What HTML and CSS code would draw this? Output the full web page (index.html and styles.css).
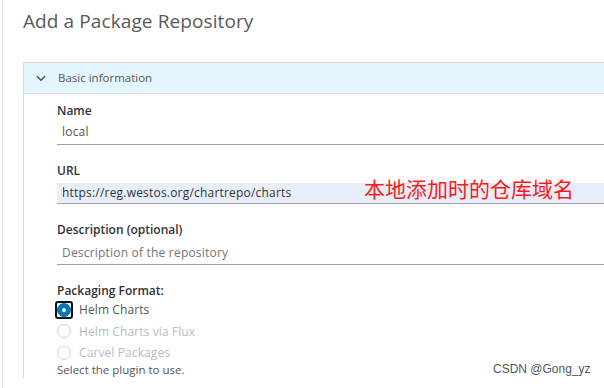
FILE: index.html
```html
<!DOCTYPE html>
<html>
<head>
<meta charset="utf-8">
<link rel="stylesheet" href="styles.css">
</head>
<body>
<div class="app">
  <div class="rail"></div>
  <div class="main">
    <h1 class="title">Add a Package Repository</h1>
    <section class="panel">
      <div class="panel-head">
        <svg class="chev" width="10" height="7" viewBox="0 0 10 7"><path d="M1 1.2 L5 5.2 L9 1.2" fill="none" stroke="#4a4a4a" stroke-width="1.5"/></svg>
        <span>Basic information</span>
      </div>
      <div class="panel-body">
        <div class="field">
          <label class="label">Name</label>
          <div class="input">local</div>
        </div>
        <div class="field">
          <label class="label">URL</label>
          <div class="input input-filled">https://reg.westos.org/chartrepo/charts</div>
        </div>
        <div class="field">
          <label class="label">Description (optional)</label>
          <div class="input input-desc placeholder">Description of the repository</div>
        </div>
        <div class="field radios">
          <label class="label">Packaging Format:</label>
          <div class="radio checked"><span class="ring"><span class="dot"></span></span><span>Helm Charts</span></div>
          <div class="radio disabled"><span class="ring"><span class="dot"></span></span><span>Helm Charts via Flux</span></div>
          <div class="radio disabled"><span class="ring"><span class="dot"></span></span><span>Carvel Packages</span></div>
          <div class="helper">Select the plugin to use.</div>
        </div>
      </div>
    </section>
  </div>
</div>
<div class="note">本地添加时的仓库域名</div>
<div class="watermark">CSDN @Gong_yz</div>
</body>
</html>
```
FILE: styles.css
```css
html, body {
  margin: 0;
  padding: 0;
  background: #fff;
  font-family: "Open Sans", "Liberation Sans", sans-serif;
}
.app {
  display: flex;
  width: 604px;
  height: 388px;
  overflow: hidden;
}
.rail {
  width: 2px;
  flex: none;
  border-right: 1px solid #dfe4e8;
}
.main {
  flex: 1;
  padding-left: 20px;
  min-width: 0;
}
.title {
  margin: 8px 0 0 0;
  font-weight: 400;
  font-size: 19px;
  line-height: 26px;
  color: #5a5a5a;
  letter-spacing: 0.1px;
}
.panel {
  margin-top: 28px;
  border-left: 1px solid #dcdcdc;
  border-top: 1px solid #d0d6da;
}
.panel-head {
  height: 31px;
  background: #e3f5fd;
  border-bottom: 1px solid #dadfe2;
  display: flex;
  align-items: center;
  padding-left: 12px;
  padding-bottom: 1px;
  box-sizing: border-box;
  font-size: 11.5px;
  color: #565656;
}
.chev {
  margin-right: 12px;
  margin-top: 1px;
}
.panel-body {
  padding-left: 33px;
  padding-top: 9px;
}
.field {
  margin-bottom: 18px;
}
.label {
  display: block;
  font-size: 12px;
  font-weight: 600;
  color: #333;
  line-height: 16px;
}
.input {
  margin-top: 1px;
  height: 24px;
  line-height: 24px;
  border-bottom: 1px solid #9aa3a8;
  padding-left: 5px;
  font-size: 12px;
  letter-spacing: 0.2px;
  color: #555;
}
.input-filled {
  background: #e8eef9;
  height: 20px;
  line-height: 20px;
  margin-top: 4px;
  color: #333;
}
.input-desc {
  margin-top: 3px;
  height: 23px;
  line-height: 23px;
}
.placeholder {
  color: #757575;
}
.radio {
  display: flex;
  align-items: center;
  height: 21.5px;
  font-size: 12px;
  letter-spacing: 0.1px;
  color: #565656;
}
.ring {
  width: 14px;
  height: 14px;
  border-radius: 50%;
  box-sizing: border-box;
  border: 1px solid #cfd3d6;
  margin-right: 8px;
  display: flex;
  align-items: center;
  justify-content: center;
  position: relative;
}
.radio.checked .ring {
  background: #0079b8;
  border-color: #0079b8;
}
.radio.checked .ring::after {
  content: "";
  position: absolute;
  inset: -3px;
  border: 2px solid #111;
  border-radius: 3px;
}
.radio.checked .dot {
  width: 4px;
  height: 4px;
  background: #fff;
  border-radius: 50%;
}
.radio.disabled {
  color: #b8bcbf;
}
.helper {
  margin-top: -2px;
  font-size: 11.5px;
  line-height: 16px;
  color: #565656;
}
.note {
  position: absolute;
  left: 364px;
  top: 175px;
  font-family: "Noto Sans CJK SC", sans-serif;
  font-size: 21px;
  line-height: 26px;
  color: #ff1a1a;
}
.watermark {
  position: absolute;
  left: 493px;
  top: 362px;
  font-family: "Liberation Sans", sans-serif;
  font-size: 12px;
  color: #555;
}
```
